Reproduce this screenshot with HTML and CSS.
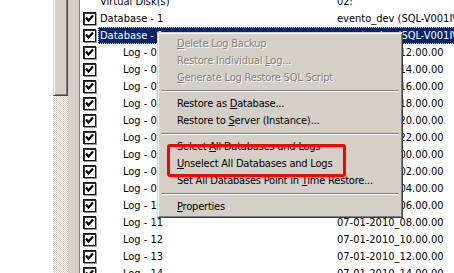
FILE: index.html
```html
<!DOCTYPE html>
<html lang="en">
<head>
    <meta charset="UTF-8">
    <title>Backup Explorer</title>
    <link rel="stylesheet" href="styles.css">
</head>
<body>
    <div class="window">
        <div class="left-pane"></div>
        <div class="scrollbar"><div class="thumb"></div></div>
        <div class="splitter"></div>

        <div class="tree">
            <div class="row">
                <span class="check empty"></span>
                <div class="cells"><span class="name">Virtual Disk(s)</span><span class="value">02:</span></div>
            </div>
            <div class="row">
                <span class="check"><svg viewBox="0 0 11 11"><polyline points="2,4.5 4.5,7.5 9,2.5"/></svg></span>
                <div class="cells"><span class="name">Database - 1</span><span class="value">evento_dev (SQL-V001I\BACKUP)</span></div>
            </div>
            <div class="row">
                <span class="check"><svg viewBox="0 0 11 11"><polyline points="2,4.5 4.5,7.5 9,2.5"/></svg></span>
                <div class="cells selected"><span class="name">Database - 1</span><span class="value">evento_dev (SQL-V001I\BACKUP)</span></div>
            </div>
            <div id="logs"></div>
        </div>

        <div class="context-menu">
            <div class="item disabled"><u>D</u>elete Log Backup</div>
            <div class="item disabled">Restore Individual <u>L</u>og...</div>
            <div class="item disabled"><u>G</u>enerate Log Restore SQL Script</div>
            <div class="separator"></div>
            <div class="item">Restore as <u>D</u>atabase...</div>
            <div class="item">Restore to <u>S</u>erver (Instance)...</div>
            <div class="separator"></div>
            <div class="item">Select <u>A</u>ll Databases and Logs</div>
            <div class="item"><u>U</u>nselect All Databases and Logs</div>
            <div class="item">Set All Databases Point in <u>T</u>ime Restore...</div>
            <div class="separator"></div>
            <div class="item"><u>P</u>roperties</div>
        </div>

        <div class="highlight-box"></div>
    </div>

    <script>
        const logs = document.getElementById('logs');
        const times = [
            '06-01-2010_12.00.00', '06-01-2010_14.00.00', '06-01-2010_16.00.00',
            '06-01-2010_18.00.00', '06-01-2010_20.00.00', '06-01-2010_22.00.00',
            '07-01-2010_00.00.00', '07-01-2010_02.00.00', '07-01-2010_04.00.00',
            '07-01-2010_06.00.00', '07-01-2010_08.00.00', '07-01-2010_10.00.00',
            '07-01-2010_12.00.00', '07-01-2010_14.00.00'
        ];

        // Build the log rows
        times.forEach((time, i) => {
            const num = String(i + 1).padStart(2, '0');
            const row = document.createElement('div');
            row.className = 'row log';
            row.innerHTML =
                '<span class="check"><svg viewBox="0 0 11 11"><polyline points="2,4.5 4.5,7.5 9,2.5"/></svg></span>' +
                '<div class="cells"><span class="name">Log - ' + num + '</span><span class="value">' + time + '</span></div>';
            logs.appendChild(row);
        });
    </script>
</body>
</html>
```

FILE: styles.css
```css
:root {
    --face: #d4d0c8;
    --shadow: #808080;
    --dark: #404040;
    --navy: #0a246a;
}

body {
    margin: 0;
    background: #fff;
    font-family: 'DejaVu Sans Condensed', 'Liberation Sans', Arial, sans-serif;
    font-size: 11px;
    overflow: hidden;
}

.window {
    position: relative;
    display: grid;
    grid-template-columns: 53px 15px 12px 1fr;
    width: 454px;
    height: 273px;
    overflow: hidden;
}

.left-pane {
    background: #fff;
}

.scrollbar {
    background: repeating-conic-gradient(var(--face) 0 25%, #fff 0 50%);
    background-size: 2px 2px;
}

.thumb {
    margin-top: -10px;
    height: 104px;
    background: var(--face);
    border: 1px solid;
    border-color: var(--face) var(--dark) var(--dark) var(--face);
    box-shadow: inset 1px 1px 0 #fff, inset -1px -1px 0 var(--shadow);
}

.splitter {
    background: var(--face);
    border-right: 1px solid var(--shadow);
}

.tree {
    margin-top: -7px;
    padding-left: 3px;
    white-space: nowrap;
}

.row {
    display: flex;
    align-items: center;
    height: 17px;
}

.check {
    flex: none;
    width: 11px;
    height: 11px;
    border: 1px solid #111;
    box-shadow: 1px 1px 0 #9a9a9a, inset 1px 1px 0 #333;
    background: #fff;
}

.check.empty {
    visibility: hidden;
}

.check svg {
    display: block;
    width: 11px;
    height: 11px;
}

.check polyline {
    fill: none;
    stroke: #000;
    stroke-width: 2.2;
}

.cells {
    flex: 1;
    display: grid;
    grid-template-columns: 237px 1fr;
    height: 17px;
    line-height: 17px;
    margin-left: 2px;
    padding-left: 2px;
    overflow: hidden;
}

.cells.selected {
    background: var(--navy);
    color: #fff;
    outline: 1px dotted #d8d0a8;
    outline-offset: -1px;
}

.log .name {
    padding-left: 23px;
}

.context-menu {
    position: absolute;
    left: 157px;
    top: 32px;
    width: 240px;
    padding: 2px;
    letter-spacing: -0.2px;
    background: var(--face);
    border: 1px solid;
    border-color: var(--face) var(--dark) var(--dark) var(--face);
    box-shadow: inset 1px 1px 0 #fff, inset -1px -1px 0 var(--shadow);
}

.item {
    height: 17px;
    line-height: 17px;
    padding-left: 17px;
    color: #000;
}

.item.disabled {
    color: var(--shadow);
    text-shadow: 1px 1px 0 #fff;
}

.separator {
    height: 9px;
    margin: 0 1px;
    background: linear-gradient(transparent 4px, var(--shadow) 4px, var(--shadow) 5px, #fff 5px, #fff 6px, transparent 6px);
}

.highlight-box {
    position: absolute;
    left: 167px;
    top: 144px;
    width: 173px;
    height: 27px;
    border: 3px solid #f00;
    border-radius: 3px;
}
```
